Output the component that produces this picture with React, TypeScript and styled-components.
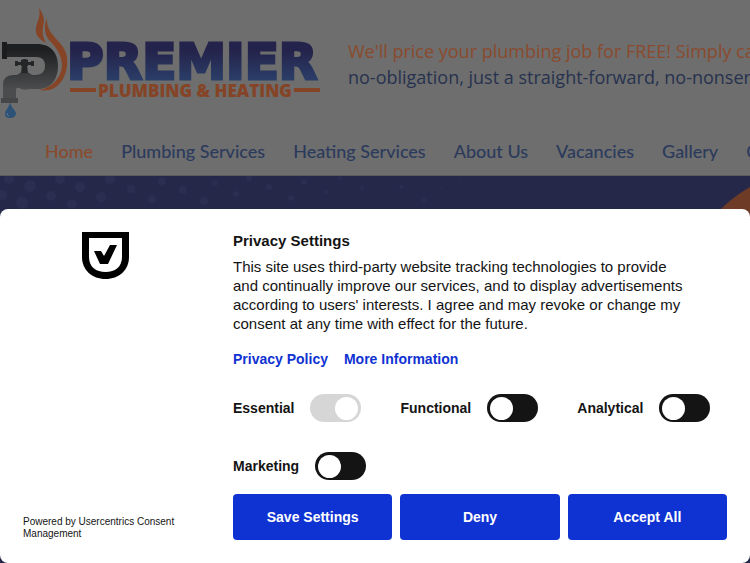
import React from "react";
import styled, { createGlobalStyle } from "styled-components";

const GlobalStyle = createGlobalStyle`
  *, *::before, *::after { box-sizing: border-box; }
  body {
    margin: 0;
    background: #26284a;
    font-family: "Liberation Sans", Arial, sans-serif;
    overflow: hidden;
  }
`;

const Page = styled.div`
  min-height: 100vh;
  display: flex;
  flex-direction: column;
`;

const Header = styled.header`
  background: #6e6e6e;
  border-bottom: 1px solid #5b5b5d;
`;

const Masthead = styled.div`
  display: flex;
  height: 128px;
  overflow: hidden;
`;

const LogoLink = styled.a`
  flex: none;
  width: 348px;
  height: 128px;
`;

const Tagline = styled.p`
  margin: 0;
  padding-top: 38px;
  font-family: "Open Sans", sans-serif;
  font-size: 18px;
  line-height: 26px;
  color: #27324f;
  white-space: nowrap;
`;

const Offer = styled.span`
  display: block;
  color: #8a4a2d;
`;

const Nav = styled.nav`
  display: flex;
  gap: 28px;
  height: 47px;
  padding: 11px 0 0 45px;
  overflow: hidden;
`;

const NavLink = styled.a<{ $active?: boolean }>`
  flex: none;
  font-family: Lato, sans-serif;
  font-size: 18px;
  font-weight: 500;
  line-height: 24px;
  text-decoration: none;
  color: ${(p) => (p.$active ? "#8a4a2d" : "#2b3a5c")};
`;

const Hero = styled.section`
  flex: 1;
  display: flex;
  justify-content: space-between;
  background: #26284a;
  overflow: hidden;
`;

const Dialog = styled.section`
  position: fixed;
  left: 0;
  right: 0;
  bottom: 0;
  display: flex;
  gap: 46px;
  padding: 23px;
  border-radius: 8px;
  background: #fff;
  color: #141414;
`;

const Side = styled.div`
  flex: none;
  width: 164px;
  display: flex;
  flex-direction: column;
  align-items: center;
  justify-content: space-between;
`;

const Powered = styled.p`
  margin: 0;
  align-self: stretch;
  font-size: 10px;
  line-height: 12px;
`;

const Main = styled.div`
  flex: 1;
  min-width: 0;
`;

const Title = styled.h1`
  margin: 0 0 7px;
  font-size: 15px;
  line-height: 18px;
`;

const Description = styled.p`
  margin: 0;
  max-width: 456px;
  font-size: 15px;
  line-height: 19px;
`;

const Links = styled.div`
  display: flex;
  gap: 16px;
  margin-top: 17px;
`;

const TextLink = styled.a`
  font-size: 14px;
  font-weight: 700;
  line-height: 18px;
  color: #0f32d2;
  text-decoration: none;
`;

const Categories = styled.div`
  display: flex;
  flex-wrap: wrap;
  gap: 30px 39px;
  margin-top: 26px;
`;

const Category = styled.label`
  display: flex;
  align-items: center;
  gap: 16px;
  font-size: 14px;
  font-weight: 700;
  line-height: 28px;
`;

const Toggle = styled.input`
  appearance: none;
  display: flex;
  align-items: center;
  width: 51px;
  height: 28px;
  margin: 0;
  padding: 0 3px;
  border-radius: 14px;
  background: #141414;
  &::before {
    content: "";
    width: 23px;
    height: 23px;
    border-radius: 50%;
    background: #fff;
  }
  &:checked { justify-content: flex-end; }
  &:disabled { background: #d6d6d6; }
`;

const Actions = styled.div`
  display: grid;
  grid-template-columns: repeat(3, 1fr);
  gap: 8px;
  margin-top: 14px;
`;

const Button = styled.button`
  height: 46px;
  border: 0;
  border-radius: 4px;
  background: #0f32d2;
  color: #fff;
  font-family: inherit;
  font-size: 14px;
  font-weight: 700;
`;

function PremierLogo() {
  return (
    <svg width="348" height="128" viewBox="0 0 348 128" role="img" aria-label="Premier Plumbing & Heating">
      <defs>
        <linearGradient id="navy" x1="0" y1="0" x2="0" y2="1">
          <stop offset="0.3" stopColor="#24234b" />
          <stop offset="0.85" stopColor="#2b406a" />
        </linearGradient>
        <linearGradient id="pipe" x1="0" y1="0" x2="0" y2="1">
          <stop offset="0.1" stopColor="#1e1f20" />
          <stop offset="0.8" stopColor="#4b4c4d" />
        </linearGradient>
      </defs>
      <path d="M39 8C44 15 45 20 43 27C42 33 43 38 46 43C39 39 35 35 36 28C37 21 41 17 39 8Z" fill="#854426" />
      <path d="M47 18C46 28 52 34 58 41C66 49 68 56 67 66C65 82 55 93 39 90C52 88 61 78 62 66C62 55 56 47 49 40C44 34 44 25 47 18Z" fill="#854426" />
      <path d="M7 44H37C51 44 58 53 58 66C58 80 50 89 38 89H29Q24 91 19 88Q16 87 16 90V100H3V85Q3 75 13 75H17Q20 72 24 72Q29 72 32 75H35C42 75 45 71 45 66C45 60 42 57 36 57H7Z" fill="url(#pipe)" />
      <path d="M2 42h5v17H2Z" fill="#1b1c1d" />
      <path d="M1 98h17v5H1Z" fill="#454647" />
      <path d="M22 65h5l1 8h-7ZM21 60q4-2 7 0v6h-7ZM18 62h13v3H18ZM15 61h3v5h-3ZM31 61h3v5h-3Z" fill="#252627" />
      <path d="M10 102C11 108 16 110 16 114Q15 118 10 118Q5 118 5 114C5 110 9 108 10 102Z" fill="#2d5276" />
      <path d="M7 113Q7 116 9 116" fill="none" stroke="#587791" />
      <text x="67" y="79" fontFamily="DejaVu Sans" fontWeight="700" fontSize="50" fill="url(#navy)" stroke="url(#navy)" strokeWidth="3">PREMIER</text>
      <text x="98" y="97" fontFamily="Open Sans" fontWeight="800" fontSize="17" fill="#854426">PLUMBING &amp; HEATING</text>
      <path d="M70 88h26v4H70ZM294 88h26v4H294Z" fill="#854426" />
    </svg>
  );
}

const dots = [
  [9, 3, 5], [30, 10, 6], [60, 3, 5], [80, 11, 5], [2, 19, 5], [51, 20, 5],
  [22, 27, 6], [72, 28, 5], [101, 21, 5], [110, 3, 5], [131, 13, 4], [162, 5, 4],
  [152, 23, 4], [183, 14, 4], [204, 25, 4], [215, 7, 3], [236, 18, 3], [249, 2, 3],
  [269, 11, 3], [291, 22, 3], [304, 6, 3], [326, 16, 2], [340, 2, 2], [362, 12, 2],
  [401, 11, 2], [424, 24, 2], [441, 12, 1], [460, 2, 1], [484, 16, 1],
];

function HeroDots() {
  return (
    <svg width="500" height="33" aria-hidden="true">
      {dots.map(([x, y, r]) => (
        <circle key={`${x}-${y}`} cx={x} cy={y} r={r} fill="#2c2e51" />
      ))}
    </svg>
  );
}

function HeroCircle() {
  return (
    <svg width="32" height="50" viewBox="0 0 32 50" aria-hidden="true">
      <path d="M0 36Q13 22 32 11V50H0Z" fill="#6d3b26" />
    </svg>
  );
}

function ShieldCheck() {
  return (
    <svg width="47" height="47" viewBox="0 0 47 47" aria-hidden="true">
      <path d="M0 0H47V25C47 38 37 47 23.500 47S0 38 0 25Z" fill="#000" />
      <path d="M7 6H40V25C40 35 33 40 23.500 40S7 35 7 25Z" fill="#fff" />
      <path d="M12 19H19L22 24L28 13H35L26 32H18Z" fill="#000" />
    </svg>
  );
}

const pages = ["Home", "Plumbing Services", "Heating Services", "About Us", "Vacancies", "Gallery", "Contact"];

const categories = [
  { name: "Essential", required: true },
  { name: "Functional", required: false },
  { name: "Analytical", required: false },
  { name: "Marketing", required: false },
];

export default function App() {
  return (
    <>
      <GlobalStyle />
      <Page>
        <Header>
          <Masthead>
            <LogoLink href="#"><PremierLogo /></LogoLink>
            <Tagline>
              <Offer>We'll price your plumbing job for FREE! Simply call</Offer>
              no-obligation, just a straight-forward, no-nonsense
            </Tagline>
          </Masthead>
          <Nav>
            {pages.map((page, i) => (
              <NavLink key={page} href="#" $active={i === 0}>{page}</NavLink>
            ))}
          </Nav>
        </Header>
        <Hero>
          <HeroDots />
          <HeroCircle />
        </Hero>
      </Page>
      <Dialog role="dialog" aria-labelledby="privacy-title">
        <Side>
          <ShieldCheck />
          <Powered>Powered by Usercentrics Consent Management</Powered>
        </Side>
        <Main>
          <Title id="privacy-title">Privacy Settings</Title>
          <Description>
            This site uses third-party website tracking technologies to provide and continually
            improve our services, and to display advertisements according to users' interests. I
            agree and may revoke or change my consent at any time with effect for the future.
          </Description>
          <Links>
            <TextLink href="#">Privacy Policy</TextLink>
            <TextLink href="#">More Information</TextLink>
          </Links>
          <Categories>
            {categories.map(({ name, required }) => (
              <Category key={name}>
                {name}
                <Toggle type="checkbox" role="switch" defaultChecked={required} disabled={required} />
              </Category>
            ))}
          </Categories>
          <Actions>
            <Button type="button">Save Settings</Button>
            <Button type="button">Deny</Button>
            <Button type="button">Accept All</Button>
          </Actions>
        </Main>
      </Dialog>
    </>
  );
}
